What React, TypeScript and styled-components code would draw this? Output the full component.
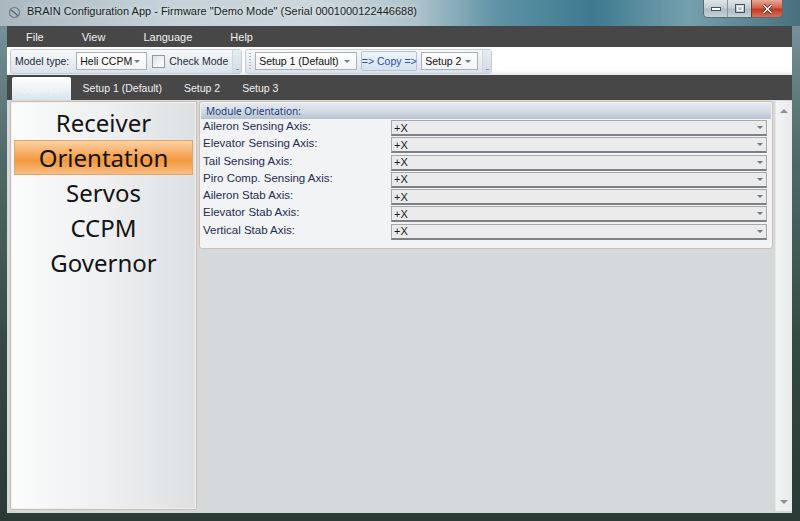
import styled, { createGlobalStyle } from 'styled-components'

const GlobalStyle = createGlobalStyle`
  html, body {
    margin: 0;
    padding: 0;
  }
  body {
    width: 800px;
    height: 521px;
    overflow: hidden;
    font-family: 'Liberation Sans', 'Noto Sans', sans-serif;
  }
`

const Window = styled.div`
  width: 800px;
  height: 521px;
  display: flex;
  flex-direction: column;
  background: linear-gradient(180deg, #7d98a2 0%, #4f6a66 30%, #33463f 70%, #2a3a34 100%);
`

const TitleBar = styled.div`
  height: 26px;
  flex: none;
  display: flex;
  align-items: flex-start;
  background: linear-gradient(
    90deg,
    #a9b8bf 0%,
    #c4d1d8 20%,
    #cbd7dc 40%,
    #aec3cc 52%,
    #5f93a6 62%,
    #3d7990 74%,
    #75a0ad 86%,
    #49707c 100%
  );
`

const AppIcon = styled.svg`
  margin: 6px 6px 0 8px;
  flex: none;
`

const Title = styled.div`
  margin-top: 5px;
  font-size: 11px;
  color: #1b1f22;
  white-space: nowrap;
  text-shadow: 0 0 6px rgba(255, 255, 255, 0.8);
`

const Controls = styled.div`
  margin-left: auto;
  margin-right: 17px;
  display: flex;
  border: 1px solid #5c6a72;
  border-top: none;
  border-radius: 0 0 5px 5px;
  overflow: hidden;
  height: 17px;
`

const CtrlButton = styled.div<{ $w: number; $close?: boolean }>`
  width: ${(p) => p.$w}px;
  display: flex;
  align-items: center;
  justify-content: center;
  border-left: ${(p) => (p.$close ? '1px solid #6b3a33' : '1px solid #8a989f')};
  background: ${(p) =>
    p.$close
      ? 'linear-gradient(180deg, #e6a99a 0%, #d2624c 45%, #c13a22 55%, #d8705a 100%)'
      : 'linear-gradient(180deg, #dfe6ea 0%, #c3cfd5 45%, #aebcc4 55%, #c6d2d8 100%)'};
  &:first-child {
    border-left: none;
  }
`

const Body = styled.div`
  flex: 1;
  display: flex;
  flex-direction: column;
  margin: 0 8px 8px 7px;
  min-height: 0;
`

const MenuBar = styled.div`
  height: 21px;
  flex: none;
  display: flex;
  align-items: center;
  background: #474747;
`

const MenuItem = styled.div`
  padding: 0 19px;
  font-size: 11px;
  color: #f0f0f0;
`

const ToolbarTray = styled.div`
  height: 28px;
  flex: none;
  display: flex;
  align-items: center;
  gap: 3px;
  padding-left: 3px;
  background: linear-gradient(180deg, #ffffff 0%, #ffffff 85%, #e6e8ea 100%);
`

const Toolbar = styled.div`
  height: 25px;
  display: flex;
  align-items: center;
  gap: 4px;
  padding-left: 4px;
  border: 1px solid #c3cbd4;
  border-radius: 3px;
  background: linear-gradient(180deg, #f7f9fb 0%, #e9eef3 50%, #dbe2ea 100%);
  box-sizing: border-box;
`

const Overflow = styled.div`
  width: 9px;
  align-self: stretch;
  margin-left: 0;
  border-left: 1px solid #d0d7de;
  background: linear-gradient(180deg, #e8edf2 0%, #d3dbe3 100%);
  display: flex;
  align-items: flex-end;
  justify-content: center;
  padding-bottom: 3px;
  box-sizing: border-box;
`

const OverflowMark = styled.div`
  width: 3px;
  height: 1px;
  background: #8e98a2;
`

const Grip = styled.div`
  width: 2px;
  align-self: stretch;
  margin: 3px 0 3px -1px;
  background: repeating-linear-gradient(180deg, #b0bac4 0 1px, transparent 1px 3px);
`

const ToolLabel = styled.span<{ $after?: number }>`
  font-size: 10.5px;
  color: #1e2a3a;
  white-space: nowrap;
  margin-right: ${(p) => p.$after ?? 0}px;
`

const ToolCombo = styled.div<{ $w: number }>`
  width: ${(p) => p.$w}px;
  height: 18px;
  flex: none;
  box-sizing: border-box;
  border: 1px solid #a8b0b8;
  background: linear-gradient(180deg, #ffffff 0%, #f1f3f5 100%);
  display: flex;
  align-items: center;
  padding: 0 3px 0 3px;
  font-size: 10.5px;
  color: #111;
  white-space: nowrap;
`

const ComboText = styled.span`
  flex: 1;
`

const Arrow = styled.span`
  width: 0;
  height: 0;
  border-left: 3px solid transparent;
  border-right: 3px solid transparent;
  border-top: 3px solid #707880;
  margin-right: 3px;
`

const CheckBox = styled.span`
  width: 11px;
  height: 11px;
  flex: none;
  border: 1px solid #8f9aa5;
  background: linear-gradient(135deg, #dfe3e7 0%, #ffffff 100%);
  margin-left: 1px;
`

const CopyButton = styled.div`
  height: 20px;
  width: 56px;
  box-sizing: border-box;
  display: flex;
  align-items: center;
  justify-content: center;
  font-size: 10.5px;
  color: #2a4fb0;
  border: 1px solid #b3c3d3;
  border-radius: 2px;
  background: linear-gradient(180deg, #eef4fa 0%, #d5e2ee 100%);
  white-space: nowrap;
`

const TabStrip = styled.div`
  height: 25px;
  flex: none;
  display: flex;
  align-items: flex-end;
  gap: 2px;
  padding-left: 5px;
  background: #474747;
`

const Tab = styled.div<{ $active?: boolean }>`
  height: ${(p) => (p.$active ? 23 : 25)}px;
  display: flex;
  align-items: center;
  padding: 0 ${(p) => (p.$active ? 8 : 10)}px;
  font-size: 10.5px;
  color: ${(p) => (p.$active ? '#f4f8fb' : '#f0f0f0')};
  border-radius: 2px 2px 0 0;
  background: ${(p) =>
    p.$active ? 'linear-gradient(180deg, #ffffff 0%, #e9f0f5 60%, #d8e4ec 100%)' : 'transparent'};
  white-space: nowrap;
`

const Content = styled.div`
  flex: 1;
  min-height: 0;
  display: flex;
  gap: 2px;
  padding: 1px 0 3px 3px;
  background: #d6d9dc;
`

const Sidebar = styled.div`
  width: 187px;
  flex: none;
  box-sizing: border-box;
  border: 1px solid #cdbcae;
  box-shadow: inset 0 0 0 1px #f6f1ec;
  border-radius: 2px;
  background: linear-gradient(90deg, #fbfcfc 0%, #eef0f1 50%, #dde0e3 100%);
  padding: 3px 3px;
  display: flex;
  flex-direction: column;
`

const NavItem = styled.div<{ $active?: boolean }>`
  height: 35px;
  box-sizing: border-box;
  display: flex;
  align-items: center;
  justify-content: center;
  font-family: 'Noto Sans', sans-serif;
  font-size: 24px;
  color: #141414;
  border: 1px solid ${(p) => (p.$active ? '#e6a466' : 'transparent')};
  background: ${(p) =>
    p.$active
      ? 'linear-gradient(180deg, #fbd2a6 0%, #f6a95e 40%, #f3983f 60%, #f8be84 100%)'
      : 'transparent'};
`

const Main = styled.div`
  flex: 1;
  min-width: 0;
`

const Group = styled.div`
  box-sizing: border-box;
  border: 1px solid #d2bfae;
  border-radius: 3px;
  background: #f2f3f4;
  padding: 1px 1px 8px 1px;
`

const GroupHeader = styled.div`
  height: 16px;
  display: flex;
  align-items: center;
  padding-left: 5px;
  font-family: 'Noto Sans', sans-serif;
  font-size: 10px;
  color: #233a78;
  border-radius: 2px 2px 0 0;
  background: linear-gradient(180deg, #e4eaf1 0%, #d0d9e3 55%, #b6c2cf 100%);
`

const Row = styled.div`
  height: 17.3px;
  display: grid;
  grid-template-columns: 190px 1fr;
  align-items: start;
`

const RowLabel = styled.div`
  font-size: 11.5px;
  color: #1f2b52;
  padding-left: 2px;
  line-height: 14px;
`

const AxisCombo = styled.div`
  height: 16px;
  margin: 1px 4px 0 0;
  box-sizing: border-box;
  border: 1px solid #a6a8aa;
  border-bottom: 2px solid #7d8084;
  background: #ebebeb;
  display: flex;
  align-items: center;
  padding-left: 2px;
  font-size: 11px;
  color: #1a1a1a;
`

const Scrollbar = styled.div`
  width: 17px;
  flex: none;
  margin-bottom: -1px;
  box-sizing: border-box;
  border-left: 1px solid #e4e6e8;
  background: linear-gradient(90deg, #f2f3f3 0%, #e9ebec 100%);
  display: flex;
  flex-direction: column;
  justify-content: space-between;
  align-items: center;
  padding: 8px 0 7px;
`

const ScrollArrow = styled.span<{ $up?: boolean }>`
  width: 0;
  height: 0;
  border-left: 4px solid transparent;
  border-right: 4px solid transparent;
  ${(p) => (p.$up ? 'border-bottom: 4px solid #8a9096;' : 'border-top: 4px solid #8a9096;')}
`

const axisRows = [
  'Aileron Sensing Axis:',
  'Elevator Sensing Axis:',
  'Tail Sensing Axis:',
  'Piro Comp. Sensing Axis:',
  'Aileron Stab Axis:',
  'Elevator Stab Axis:',
  'Vertical Stab Axis:',
]

const navItems = ['Receiver', 'Orientation', 'Servos', 'CCPM', 'Governor']

export default function App() {
  return (
    <>
      <GlobalStyle />
      <Window>
        <TitleBar>
          <AppIcon width="13" height="13" viewBox="0 0 13 13">
            <circle cx="6.5" cy="6.5" r="5" fill="none" stroke="#6f7c84" strokeWidth="1.2" />
            <path d="M3 4 L7 7 L10 10" stroke="#5a666e" strokeWidth="1.4" fill="none" />
          </AppIcon>
          <Title>BRAIN Configuration App - Firmware "Demo Mode" (Serial 0001000122446688)</Title>
          <Controls>
            <CtrlButton $w={23}>
              <svg width="10" height="4" viewBox="0 0 10 4">
                <rect x="0.5" y="0.5" width="9" height="3" fill="#fff" stroke="#44525a" />
              </svg>
            </CtrlButton>
            <CtrlButton $w={23}>
              <svg width="10" height="9" viewBox="0 0 10 9">
                <rect x="0.5" y="0.5" width="9" height="8" fill="none" stroke="#44525a" />
                <rect x="2.5" y="2.5" width="5" height="4" fill="none" stroke="#ffffff" />
              </svg>
            </CtrlButton>
            <CtrlButton $w={30} $close>
              <svg width="11" height="10" viewBox="0 0 11 10">
                <path d="M1.5 1 L9.5 9 M9.5 1 L1.5 9" stroke="#4a1a12" strokeWidth="3" />
                <path d="M1.5 1 L9.5 9 M9.5 1 L1.5 9" stroke="#ffffff" strokeWidth="1.6" />
              </svg>
            </CtrlButton>
          </Controls>
        </TitleBar>
        <Body>
          <MenuBar>
            <MenuItem>File</MenuItem>
            <MenuItem>View</MenuItem>
            <MenuItem>Language</MenuItem>
            <MenuItem>Help</MenuItem>
          </MenuBar>
          <ToolbarTray>
            <Toolbar>
              <ToolLabel $after={3}>Model type:</ToolLabel>
              <ToolCombo $w={71}>
                <ComboText>Heli CCPM</ComboText>
                <Arrow />
              </ToolCombo>
              <CheckBox />
              <ToolLabel>Check Mode</ToolLabel>
              <Overflow>
                <OverflowMark />
              </Overflow>
            </Toolbar>
            <Toolbar>
              <Grip />
              <ToolCombo $w={102}>
                <ComboText>Setup 1 (Default)</ComboText>
                <Arrow />
              </ToolCombo>
              <CopyButton>=&gt; Copy =&gt;</CopyButton>
              <ToolCombo $w={57}>
                <ComboText>Setup 2</ComboText>
                <Arrow />
              </ToolCombo>
              <Overflow>
                <OverflowMark />
              </Overflow>
            </Toolbar>
          </ToolbarTray>
          <TabStrip>
            <Tab $active>Common</Tab>
            <Tab>Setup 1 (Default)</Tab>
            <Tab>Setup 2</Tab>
            <Tab>Setup 3</Tab>
          </TabStrip>
          <Content>
            <Sidebar>
              {navItems.map((n) => (
                <NavItem key={n} $active={n === 'Orientation'}>
                  {n}
                </NavItem>
              ))}
            </Sidebar>
            <Main>
              <Group>
                <GroupHeader>Module Orientation:</GroupHeader>
                {axisRows.map((r) => (
                  <Row key={r}>
                    <RowLabel>{r}</RowLabel>
                    <AxisCombo>
                      <ComboText>+X</ComboText>
                      <Arrow />
                    </AxisCombo>
                  </Row>
                ))}
              </Group>
            </Main>
            <Scrollbar>
              <ScrollArrow $up />
              <ScrollArrow />
            </Scrollbar>
          </Content>
        </Body>
      </Window>
    </>
  )
}
